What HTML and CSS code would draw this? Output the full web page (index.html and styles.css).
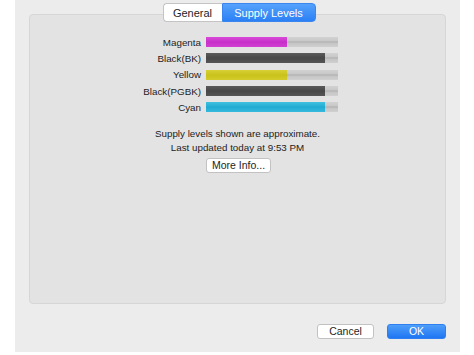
FILE: index.html
```html
<!DOCTYPE html>
<html>
<head>
<meta charset="utf-8">
<link rel="stylesheet" href="styles.css">
</head>
<body>
<div class="window">
  <div class="tabs">
    <div class="tab">General</div>
    <div class="tab active">Supply Levels</div>
  </div>
  <div class="panel">
    <div class="levels">
      <div class="label">Magenta</div>
      <div class="track"><div class="fill magenta" style="width:61%"></div></div>
      <div class="label">Black(BK)</div>
      <div class="track"><div class="fill black" style="width:90%"></div></div>
      <div class="label">Yellow</div>
      <div class="track"><div class="fill yellow" style="width:61%"></div></div>
      <div class="label">Black(PGBK)</div>
      <div class="track"><div class="fill black" style="width:90%"></div></div>
      <div class="label">Cyan</div>
      <div class="track"><div class="fill cyan" style="width:90%"></div></div>
    </div>
    <p class="note first">Supply levels shown are approximate.</p>
    <p class="note">Last updated today at 9:53 PM</p>
    <div class="more"><button class="btn more-btn">More Info...</button></div>
  </div>
  <div class="actions">
    <button class="btn cancel">Cancel</button>
    <button class="btn ok">OK</button>
  </div>
</div>
</body>
</html>
```
FILE: styles.css
```css
html, body {
  margin: 0;
  padding: 0;
  background: #ffffff;
}
body {
  font-family: "Liberation Sans", Arial, sans-serif;
  font-size: 9.8px;
  color: #1e1e1e;
}
.window {
  margin-left: 15px;
  width: 445px;
  height: 352px;
  background: #ececec;
  box-sizing: border-box;
  padding: 3px 14px 0 14px;
  display: flex;
  flex-direction: column;
}
.tabs {
  display: flex;
  justify-content: center;
  height: 20px;
  margin-bottom: -9px;
  margin-left: 3px;
  position: relative;
  z-index: 1;
}
.tab {
  display: flex;
  align-items: center;
  justify-content: center;
  height: 19px;
  box-sizing: border-box;
  font-size: 11px;
  background: #ffffff;
  border: 1px solid #c4c4c4;
  color: #1e1e1e;
}
.tab:first-child {
  width: 59px;
  border-radius: 4px 0 0 4px;
  border-right: none;
}
.tab.active {
  width: 94px;
  background: linear-gradient(#55a2fb, #2b80f5);
  border-color: #3a86ee;
  color: #ffffff;
  border-radius: 0 4px 4px 0;
}
.panel {
  height: 290px;
  box-sizing: border-box;
  background: #e3e3e3;
  border: 1px solid #d6d6d6;
  border-radius: 4px;
  padding-top: 19px;
}
.levels {
  display: grid;
  grid-template-columns: 80px 132px;
  grid-auto-rows: 16.3px;
  column-gap: 5px;
  align-items: center;
  margin-left: 91px;
}
.label {
  text-align: right;
  color: #222;
}
.track {
  height: 10px;
  background: linear-gradient(#d2d2d2 0%, #c9c9c9 35%, #b3b3b3 50%, #c6c6c6 65%, #d0d0d0 100%);
  position: relative;
}
.fill {
  height: 10px;
}
.magenta { background: linear-gradient(#d94bd9, #c72fc9 50%, #d13fd2); }
.black { background: linear-gradient(#5a5a5a, #474747 50%, #555555); }
.yellow { background: linear-gradient(#d8d137, #c9c21b 50%, #d3cc2c); }
.cyan { background: linear-gradient(#40c1e0, #20abd3 50%, #36b9dc); }
.note {
  margin: 0;
  text-align: center;
  line-height: 14px;
  color: #222;
}
.note.first {
  margin-top: 12px;
}
.more {
  display: flex;
  justify-content: center;
  margin-top: 3px;
  margin-left: 2px;
}
.btn {
  font-family: "Liberation Sans", Arial, sans-serif;
  font-size: 10.5px;
  height: 15px;
  padding: 0;
  box-sizing: border-box;
  border-radius: 3px;
  border: 1px solid #c2c2c2;
  background: #ffffff;
  color: #1e1e1e;
  line-height: 13px;
}
.more-btn {
  width: 65px;
}
.actions {
  display: flex;
  justify-content: flex-end;
  gap: 13px;
  margin-top: 20px;
  margin-right: 0px;
}
.cancel {
  width: 57px;
}
.ok {
  width: 59px;
  background: linear-gradient(#4f9efa, #1f76f2);
  border-color: #2f7ff0;
  color: #ffffff;
}
```
